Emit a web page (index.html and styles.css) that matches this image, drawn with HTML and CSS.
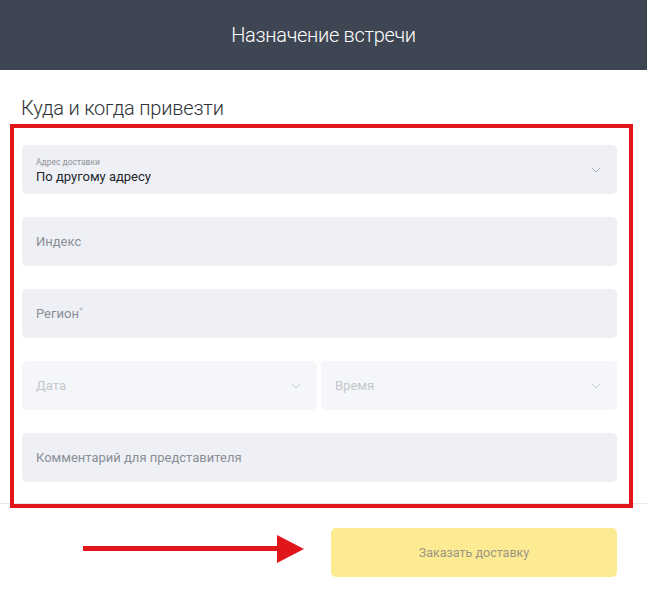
FILE: index.html
```html
<!DOCTYPE html>
<html lang="ru">
<head>
<meta charset="utf-8">
<title>Назначение встречи</title>
<link rel="stylesheet" href="styles.css">
</head>
<body>
<header class="top">
  <h1 class="top-title">Назначение встречи</h1>
</header>
<main class="content">
  <h2 class="section-title">Куда и когда привезти</h2>
  <div class="fields">
    <div class="field field-select">
      <div class="select-text">
        <span class="small-label">Адрес доставки</span>
        <span class="value">По другому адресу</span>
      </div>
      <svg class="chev" viewBox="0 0 10 6" width="10" height="6"><path d="M1 1 L5 5 L9 1" fill="none" stroke="#a7abb3" stroke-width="1"/></svg>
    </div>
    <div class="field"><span class="placeholder">Индекс</span></div>
    <div class="field"><span class="placeholder">Регион<sup class="star">*</sup></span></div>
    <div class="row-two">
      <div class="field field-disabled">
        <span class="placeholder">Дата</span>
        <svg class="chev" viewBox="0 0 10 6" width="10" height="6"><path d="M1 1 L5 5 L9 1" fill="none" stroke="#c6cad1" stroke-width="1"/></svg>
      </div>
      <div class="field field-disabled">
        <span class="placeholder">Время</span>
        <svg class="chev" viewBox="0 0 10 6" width="10" height="6"><path d="M1 1 L5 5 L9 1" fill="none" stroke="#c6cad1" stroke-width="1"/></svg>
      </div>
    </div>
    <div class="field"><span class="placeholder">Комментарий для представителя</span></div>
  </div>
</main>
<footer class="bottom">
  <button class="order-btn" type="button">Заказать доставку</button>
</footer>
<div class="frame"></div>
<svg class="arrow" width="230" height="30" viewBox="0 0 230 30">
  <rect x="0" y="11" width="196" height="5" fill="#e0161b"/>
  <polygon points="194,0 221,14 194,28" fill="#e0161b"/>
</svg>
</body>
</html>
```

FILE: styles.css
```css
* { box-sizing: border-box; }
html, body { margin: 0; padding: 0; }
body {
  width: 647px;
  height: 599px;
  background: #ffffff;
  font-family: Roboto, "Liberation Sans", sans-serif;
  position: relative;
  overflow: hidden;
}
.top {
  height: 70px;
  background: #3e4653;
  display: flex;
  align-items: center;
  justify-content: center;
}
.top-title {
  margin: 0;
  color: #ffffff;
  font-size: 20px;
  font-weight: 300;
  letter-spacing: -0.3px;
}
.content {
  padding: 26px 30px 0 22px;
}
.section-title {
  margin: 0 0 25px -1px;
  font-size: 20px;
  line-height: 24px;
  font-weight: 300;
  color: #2f3338;
  letter-spacing: -0.2px;
}
.fields {
  display: flex;
  flex-direction: column;
  gap: 23px;
}
.field {
  height: 49px;
  background: #eef0f5;
  border-radius: 5px;
  display: flex;
  align-items: center;
  justify-content: space-between;
  padding: 0 14px 0 14px;
}
.placeholder {
  font-size: 13px;
  color: #8a8e96;
}
.star {
  font-size: 9px;
  color: #b5b9c0;
  vertical-align: 4px;
}
.select-text {
  display: flex;
  flex-direction: column;
  padding-top: 4px;
}
.small-label {
  font-size: 8.5px;
  color: #8f939b;
  line-height: 11px;
}
.value {
  font-size: 13px;
  color: #23262b;
  line-height: 18px;
}
.chev { margin-right: 2px; }
.row-two {
  display: grid;
  grid-template-columns: 295px 1fr;
  gap: 4px;
}
.field-disabled {
  background: #f5f6f9;
}
.field-disabled .placeholder {
  color: #c3c7ce;
}
.bottom {
  margin-top: 21px;
  border-top: 1px solid #e6e7ea;
  padding: 24px 30px 0 0;
  display: flex;
  justify-content: flex-end;
}
.order-btn {
  width: 286px;
  height: 49px;
  border: 0;
  border-radius: 5px;
  background: #fdeb93;
  color: #9a9584;
  font-family: Roboto, "Liberation Sans", sans-serif;
  font-size: 12.5px;
  font-weight: 400;
}
.frame {
  position: absolute;
  left: 10px;
  top: 124px;
  width: 623px;
  height: 384px;
  border: 4px solid #e0161b;
  pointer-events: none;
}
.arrow {
  position: absolute;
  left: 83px;
  top: 535px;
}
```
